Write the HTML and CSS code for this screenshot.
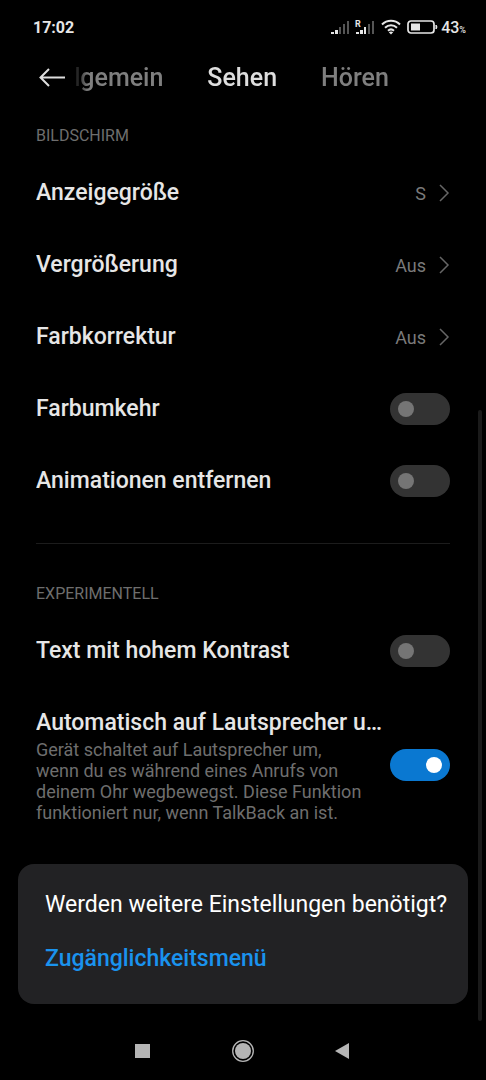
FILE: index.html
```html
<!DOCTYPE html>
<html lang="de">
<head>
    <meta charset="UTF-8">
    <meta name="viewport" content="width=device-width, initial-scale=1">
    <title>Bedienungshilfen</title>
    <link rel="stylesheet" href="styles.css">
</head>
<body>
<div class="screen">
    <div class="status">
        <span class="time">17:02</span>
        <div class="status-icons">
            <svg width="44" height="18" viewBox="0 0 44 18">
                <g fill="#e6e6e6">
                    <path d="M0 14h3v2H0zM4 12h3v4H4z"/>
                    <path d="M25 14h3v2h-3zM29 12h3v4h-3zM33 9h2v7h-2z"/>
                </g>
                <g fill="#555">
                    <path d="M8 9h2v7H8zM12 6h2v10h-2zM16 3h2v13h-2z"/>
                    <path d="M37 6h2v10h-2zM41 3h2v13h-2z"/>
                </g>
                <text class="roaming" x="24" y="9">R</text>
            </svg>
            <svg width="20" height="16" viewBox="0 0 20 16" fill="none" stroke="#e6e6e6" stroke-width="2">
                <path d="M1 5.5C6 .5 14 .5 19 5.5M4 8.7c3.500-3.300 8.500-3.300 12 0M7 11.700c1.800-1.600 4.200-1.600 6 0"/>
                <path d="M10 15.500l-2.200-2.300q2.200-1.400 4.400 0z" fill="#e6e6e6" stroke="none"/>
            </svg>
            <div class="power">
                <svg width="31" height="14" viewBox="0 0 31 14">
                    <rect x="1" y="1" width="26" height="12" rx="3" fill="none" stroke="#e6e6e6" stroke-width="1.700"/>
                    <rect x="4" y="3.500" width="9" height="7" fill="#e6e6e6"/>
                    <path d="M29 5q2 2 0 4z" fill="#e6e6e6" stroke="#e6e6e6"/>
                </svg>
                <span class="battery">43<small>%</small></span>
            </div>
        </div>
    </div>

    <header class="header">
        <button class="back" aria-label="Zurück">
            <svg width="28" height="20" viewBox="0 0 28 20" fill="none" stroke="#dedede" stroke-width="2">
                <path d="M11 1L2.500 9.500 11 18M2.500 9.500H27"/>
            </svg>
        </button>
        <nav class="tabs">
            <a class="tab first" href="#">Allgemein</a>
            <a class="tab on" href="#">Sehen</a>
            <a class="tab" href="#">Hören</a>
        </nav>
    </header>

    <main class="content">
        <section class="group">
            <h2>BILDSCHIRM</h2>
            <a class="row" href="#">
                <span class="title">Anzeigegröße</span>
                <span class="value">S</span>
                <svg class="arrow" width="12" height="18" viewBox="0 0 12 18"><path d="M2 1l8 8-8 8"/></svg>
            </a>
            <a class="row" href="#">
                <span class="title">Vergrößerung</span>
                <span class="value">Aus</span>
                <svg class="arrow" width="12" height="18" viewBox="0 0 12 18"><path d="M2 1l8 8-8 8"/></svg>
            </a>
            <a class="row" href="#">
                <span class="title">Farbkorrektur</span>
                <span class="value">Aus</span>
                <svg class="arrow" width="12" height="18" viewBox="0 0 12 18"><path d="M2 1l8 8-8 8"/></svg>
            </a>
            <label class="row" for="invert">
                <span class="title">Farbumkehr</span>
                <input class="switch" type="checkbox" id="invert">
            </label>
            <label class="row" for="animations">
                <span class="title">Animationen entfernen</span>
                <input class="switch" type="checkbox" id="animations">
            </label>
        </section>

        <section class="group">
            <h2>EXPERIMENTELL</h2>
            <label class="row" for="contrast">
                <span class="title">Text mit hohem Kontrast</span>
                <input class="switch" type="checkbox" id="contrast">
            </label>
            <label class="row" for="speaker">
                <span class="text">
                    <span class="title">Automatisch auf Lautsprecher umschalten</span>
                    <span class="desc">Gerät schaltet auf Lautsprecher um, wenn du es während eines Anrufs von deinem Ohr wegbewegst. Diese Funktion funktioniert nur, wenn TalkBack an ist.</span>
                </span>
                <input class="switch" type="checkbox" id="speaker" checked>
            </label>
        </section>
    </main>

    <aside class="card">
        <p>Werden weitere Einstellungen benötigt?</p>
        <a href="#">Zugänglichkeitsmenü</a>
    </aside>

    <div class="navbar">
        <button aria-label="Übersicht">
            <svg width="24" height="24" viewBox="0 0 24 24"><path d="M4 5h15v14H4z"/></svg>
        </button>
        <button aria-label="Startseite">
            <svg width="24" height="24" viewBox="0 0 24 24">
                <circle cx="12" cy="12" r="8"/>
                <circle cx="12" cy="12" r="10.300" fill="none" stroke="#b5b5b5" stroke-width="1.300"/>
            </svg>
        </button>
        <button aria-label="Zurück">
            <svg width="24" height="24" viewBox="0 0 24 24"><path d="M4 12l14-8v16z"/></svg>
        </button>
    </div>
    <div class="scrollbar"></div>
</div>
</body>
</html>
```
FILE: styles.css
```css
*{
    margin: 0;
    padding: 0;
    box-sizing: border-box;
}
body{
    background: #000;
    color: #e6e6e6;
    font-family: Roboto, "Liberation Sans", sans-serif;
}
a{
    color: inherit;
    text-decoration: none;
}
button{
    background: none;
    border: 0;
}
svg{
    display: block;
}
.screen{
    position: relative;
    min-height: 100vh;
    display: flex;
    flex-direction: column;
}

/* status bar */
.status{
    height: 54px;
    padding: 0 20px 0 33px;
    display: flex;
    align-items: center;
    justify-content: space-between;
}
.time{
    font-size: 16px;
    font-weight: 700;
}
.status-icons{
    display: flex;
    align-items: center;
    gap: 6px;
}
.roaming{
    font-size: 9px;
    font-weight: 700;
    fill: #e6e6e6;
}
.power{
    display: flex;
    align-items: center;
    gap: 3px;
}
.battery{
    font-size: 16px;
    font-weight: 500;
}
.battery small{
    font-size: 9px;
}

/* header */
.header{
    height: 48px;
    padding-left: 38px;
    display: flex;
    align-items: center;
}
.back{
    flex: none;
    width: 38px;
}
.tabs{
    flex: 1;
    min-width: 0;
    display: flex;
    gap: 44px;
    overflow: hidden;
    -webkit-mask-image: linear-gradient(to right, rgba(0,0,0,.2), #000 12px);
    mask-image: linear-gradient(to right, rgba(0,0,0,.2), #000 12px);
}
.tab{
    color: #7f7f7f;
    font-size: 25px;
    font-weight: 500;
    line-height: 34px;
}
.tab.first{
    margin-left: -25px;
}
.tab.on{
    color: #dedede;
}

/* settings list */
.content{
    padding: 0 36px;
}
.group{
    padding: 22px 0 26px;
}
.group + .group{
    border-top: 1px solid #1c1c1c;
    padding: 38px 0 21px;
}
.group h2{
    color: #6e6e6e;
    font-size: 16px;
    font-weight: 400;
    line-height: 24px;
    margin-bottom: 9px;
}
.row{
    min-height: 72px;
    padding: 20px 0;
    display: flex;
    align-items: center;
}
.text{
    flex: 1;
    min-width: 0;
    margin-right: 6px;
}
.title{
    display: block;
    flex: 1;
    font-size: 23px;
    font-weight: 500;
    line-height: 32px;
    white-space: nowrap;
    overflow: hidden;
    text-overflow: ellipsis;
}
.desc{
    display: block;
    padding-right: 20px;
    color: #6e6e6e;
    font-size: 18px;
    line-height: 21px;
}
.value{
    color: #7a7a7a;
    font-size: 18px;
    margin-right: 12px;
}
.arrow{
    fill: none;
    stroke: #666;
    stroke-width: 1.5;
}
.switch{
    appearance: none;
    -webkit-appearance: none;
    flex: none;
    width: 60px;
    height: 32px;
    padding: 8px;
    border-radius: 16px;
    background: #333;
}
.switch::before{
    content: "";
    display: block;
    width: 16px;
    height: 16px;
    border-radius: 50%;
    background: #757575;
}
.switch:checked{
    background: #0a78d1;
}
.switch:checked::before{
    margin-left: auto;
    background: #fff;
}

/* hint card */
.card{
    margin: 0 18px;
    padding: 25px 20px 29px 27px;
    border-radius: 16px;
    background: #222224;
    font-size: 23px;
    line-height: 32px;
}
.card p{
    color: #fff;
    margin-bottom: 22px;
}
.card a{
    color: #1a93ee;
    font-weight: 500;
}

/* system buttons */
.navbar{
    margin-top: auto;
    height: 58px;
    display: flex;
    justify-content: center;
    align-items: center;
    gap: 76px;
}
.navbar svg{
    fill: #b5b5b5;
}
.scrollbar{
    position: absolute;
    right: 4px;
    top: 410px;
    bottom: 59px;
    width: 4px;
    border-radius: 2px;
    background: #1a1a1a;
}
```
